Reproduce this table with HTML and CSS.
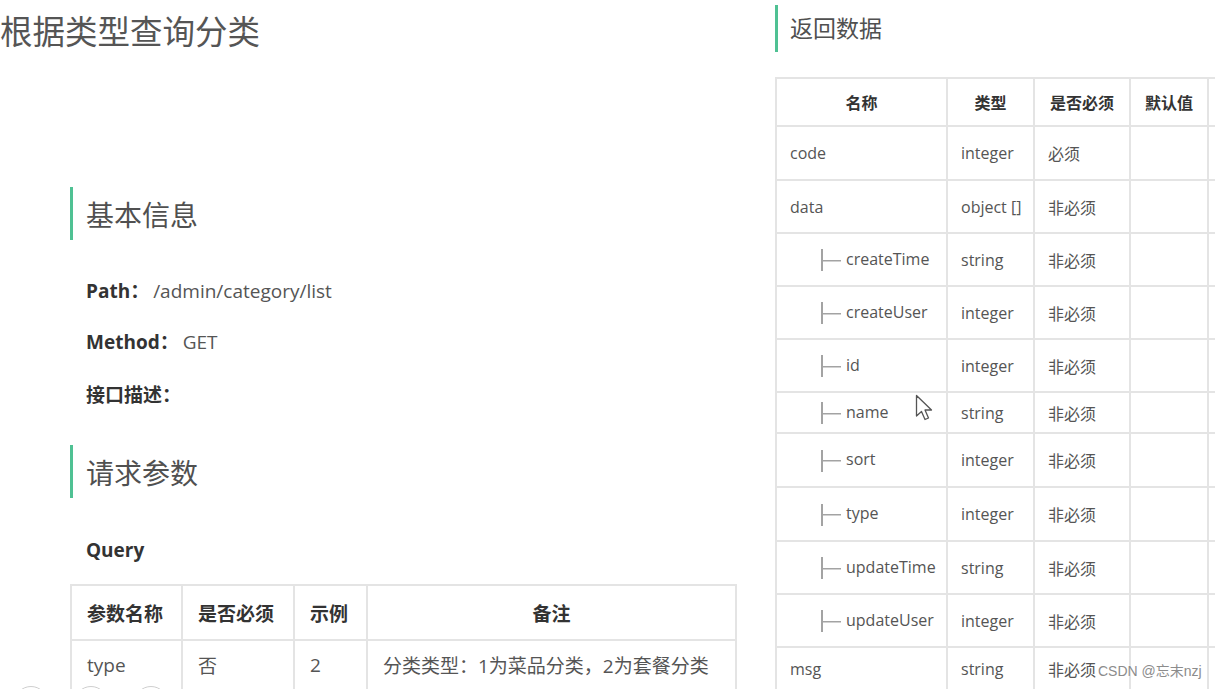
FILE: index.html
```html
<!DOCTYPE html>
<html>
<head>
    <title>根据类型查询分类</title>
    <link rel="stylesheet" href="styles.css">
</head>
<body>
    <div class="page">
        <div class="left">
            <h1 class="title">根据类型查询分类</h1>

            <div class="block">
                <h2 class="heading">基本信息</h2>
                <p class="field"><b>Path：</b><span>/admin/category/list</span></p>
                <p class="field"><b>Method：</b><span>GET</span></p>
                <p class="field"><b>接口描述：</b></p>

                <h2 class="heading second">请求参数</h2>
                <p class="query">Query</p>
                <table class="params">
                    <tr class="head">
                        <th class="c1">参数名称</th>
                        <th class="c2">是否必须</th>
                        <th class="c3">示例</th>
                        <th class="c4 center">备注</th>
                    </tr>
                    <tr>
                        <td>type</td>
                        <td>否</td>
                        <td>2</td>
                        <td>分类类型：1为菜品分类，2为套餐分类</td>
                    </tr>
                </table>
            </div>
        </div>

        <div class="right">
            <h2 class="heading small">返回数据</h2>
            <table class="result">
                <tr class="r-head">
                    <th class="w1">名称</th>
                    <th class="w2">类型</th>
                    <th class="w3">是否必须</th>
                    <th class="w4">默认值</th>
                    <th class="w5"></th>
                </tr>
                <tr class="r-row tall"><td>code</td><td>integer</td><td>必须</td><td></td><td></td></tr>
                <tr class="r-row"><td>data</td><td>object []</td><td>非必须</td><td></td><td></td></tr>
                <tr class="r-row"><td class="child"><span class="tree"></span>createTime</td><td>string</td><td>非必须</td><td></td><td></td></tr>
                <tr class="r-row"><td class="child"><span class="tree"></span>createUser</td><td>integer</td><td>非必须</td><td></td><td></td></tr>
                <tr class="r-row"><td class="child"><span class="tree"></span>id</td><td>integer</td><td>非必须</td><td></td><td></td></tr>
                <tr class="r-row short"><td class="child"><span class="tree"></span>name</td><td>string</td><td>非必须</td><td></td><td></td></tr>
                <tr class="r-row tall"><td class="child"><span class="tree"></span>sort</td><td>integer</td><td>非必须</td><td></td><td></td></tr>
                <tr class="r-row tall"><td class="child"><span class="tree"></span>type</td><td>integer</td><td>非必须</td><td></td><td></td></tr>
                <tr class="r-row"><td class="child"><span class="tree"></span>updateTime</td><td>string</td><td>非必须</td><td></td><td></td></tr>
                <tr class="r-row"><td class="child"><span class="tree"></span>updateUser</td><td>integer</td><td>非必须</td><td></td><td></td></tr>
                <tr class="r-row last"><td>msg</td><td>string</td><td>非必须</td><td></td><td></td></tr>
            </table>
        </div>
    </div>

    <!-- mouse pointer captured in the screenshot -->
    <svg class="cursor" width="22" height="28" viewBox="0 0 22 28">
        <path d="M1.5 1.5 L1.5 22 L6.5 17.5 L10 25.5 L13.5 24 L10 16 L16.5 16 Z" fill="#fff" stroke="#555" stroke-width="1.3" stroke-linejoin="round"/>
    </svg>

    <div class="dots">
        <span class="dot"></span>
        <span class="dot"></span>
        <span class="dot"></span>
    </div>

    <div class="watermark">CSDN @忘末nzj</div>
</body>
</html>
```

FILE: styles.css
```css
html, body {
    margin: 0;
    padding: 0;
    background-color: #fff;
    overflow: hidden;
}
body {
    width: 1215px;
    height: 689px;
    position: relative;
    font-family: "Open Sans", "Noto Sans CJK SC", sans-serif;
    color: #555;
}
.page {
    display: flex;
}
.left {
    width: 760px;
    flex-shrink: 0;
}
.right {
    flex: 1;
    padding-left: 15px;
    overflow: hidden;
}
.title {
    margin: 0;
    padding-top: 11px;
    font-size: 32.5px;
    line-height: 42px;
    font-weight: normal;
    color: #555;
}
.block {
    margin-left: 70px;
    padding-top: 134px;
}
.heading {
    margin: 0;
    border-left: 3px solid #4fc193;
    padding-left: 13px;
    font-size: 28px;
    font-weight: normal;
    line-height: 56px;
    height: 53px;
    color: #505050;
}
.heading.second {
    margin-top: 22px;
}
.heading.small {
    margin-top: 5px;
    font-size: 23px;
    line-height: 47px;
    height: 47px;
    padding-left: 12px;
}
.field {
    margin: 0;
    padding-left: 16px;
    font-size: 19px;
    line-height: 51px;
}
.field:first-of-type {
    margin-top: 26px;
}
.field:nth-of-type(3) {
    line-height: 55px;
}
.field b {
    color: #333;
    font-weight: bold;
}
.field span {
    margin-left: 4px;
}
.query {
    margin: 39px 0 0;
    padding-left: 16px;
    font-size: 19px;
    font-weight: bold;
    color: #333;
    line-height: 26px;
}
.params {
    margin-top: 21px;
    border-collapse: collapse;
    table-layout: fixed;
    width: 667px;
    font-size: 19px;
}
.params th, .params td {
    border: 2px solid #e4e4e4;
    padding: 0 0 0 15px;
    text-align: left;
    white-space: nowrap;
}
.params th {
    color: #333;
    font-weight: bold;
    height: 53px;
}
.params td {
    height: 48px;
}
.params .c1 { width: 94px; }
.params .c2 { width: 95px; }
.params .c3 { width: 56px; }
.params .center {
    text-align: center;
    padding-left: 0;
}
.result {
    margin-top: 25px;
    border-collapse: collapse;
    table-layout: fixed;
    width: 532px;
    font-size: 16px;
}
.result th, .result td {
    border: 2px solid #e4e4e4;
    padding: 0 0 0 13px;
    text-align: left;
    white-space: nowrap;
}
.result th {
    text-align: center;
    padding: 0;
    color: #333;
    font-weight: bold;
    height: 46px;
}
.result .w1 { width: 169px; }
.result .w2 { width: 85px; }
.result .w3 { width: 94px; }
.result .w4 { width: 76px; }
.result .w5 { width: 100px; }
.r-row td {
    height: 51px;
}
.r-row.tall td {
    height: 52px;
}
.r-row.short td {
    height: 39px;
}
.r-row.last td {
    height: 42px;
}
.result td.child {
    padding-left: 44px;
}
.tree {
    display: inline-block;
    width: 18px;
    height: 22px;
    border-left: 2px solid #a3a3a3;
    background: linear-gradient(#a3a3a3, #a3a3a3) no-repeat 0 50% / 100% 1.5px;
    margin-right: 5px;
    vertical-align: middle;
}
.cursor {
    position: absolute;
    left: 915px;
    top: 394px;
}
.dots {
    position: absolute;
    left: 14px;
    top: 686px;
    display: flex;
    gap: 26px;
}
.dot {
    width: 32px;
    height: 32px;
    border: 1px solid #cfcfcf;
    border-radius: 50%;
}
.watermark {
    position: absolute;
    left: 1098px;
    top: 660px;
    font-family: "Liberation Sans", "Noto Sans CJK SC", sans-serif;
    font-size: 14px;
    color: #8c8c8c;
    text-shadow: 0 0 2px #fff;
}
```
